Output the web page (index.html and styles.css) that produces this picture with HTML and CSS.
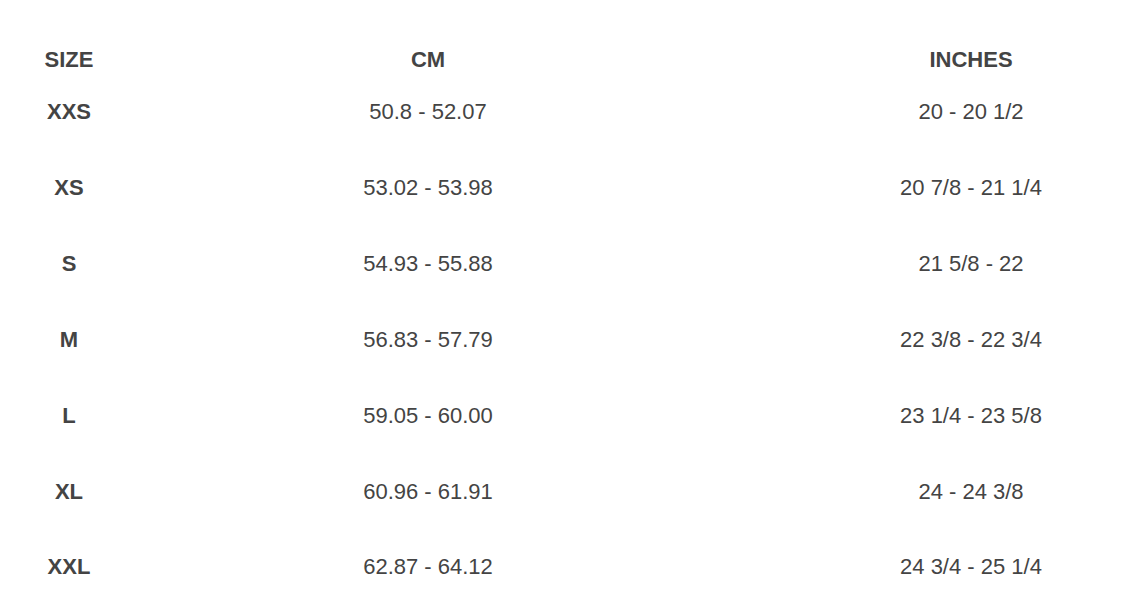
FILE: index.html
```html
<!DOCTYPE html>
<html>
<head>
<meta charset="utf-8">
<link rel="stylesheet" href="styles.css">
</head>
<body>
<div class="chart">
  <div class="row head">
    <div class="c1">SIZE</div><div class="c2">CM</div><div class="c3">INCHES</div>
  </div>
  <div class="row"><div class="c1">XXS</div><div class="c2">50.8 - 52.07</div><div class="c3">20 - 20 1/2</div></div>
  <div class="row"><div class="c1">XS</div><div class="c2">53.02 - 53.98</div><div class="c3">20 7/8 - 21 1/4</div></div>
  <div class="row"><div class="c1">S</div><div class="c2">54.93 - 55.88</div><div class="c3">21 5/8 - 22</div></div>
  <div class="row"><div class="c1">M</div><div class="c2">56.83 - 57.79</div><div class="c3">22 3/8 - 22 3/4</div></div>
  <div class="row"><div class="c1">L</div><div class="c2">59.05 - 60.00</div><div class="c3">23 1/4 - 23 5/8</div></div>
  <div class="row"><div class="c1">XL</div><div class="c2">60.96 - 61.91</div><div class="c3">24 - 24 3/8</div></div>
  <div class="row"><div class="c1">XXL</div><div class="c2">62.87 - 64.12</div><div class="c3">24 3/4 - 25 1/4</div></div>
</div>
</body>
</html>
```

FILE: styles.css
```css
html, body {
  margin: 0;
  padding: 0;
  background: #fff;
  overflow: hidden;
}
body {
  font-family: "Liberation Sans", Arial, sans-serif;
  font-size: 22px;
  color: #444;
}
.chart {
  padding-top: 44px;
}
.row {
  display: grid;
  grid-template-columns: 138px 578px 1fr;
  align-items: center;
  height: 75.83px;
}
.row.head {
  height: 30px;
  font-weight: bold;
}
.row > div {
  text-align: center;
  line-height: 25px;
}
.row > .c2 {
  padding-left: 2px;
}
.row > .c3 {
  padding-left: 86px;
}
.row > .c1 {
  font-weight: bold;
}
```
